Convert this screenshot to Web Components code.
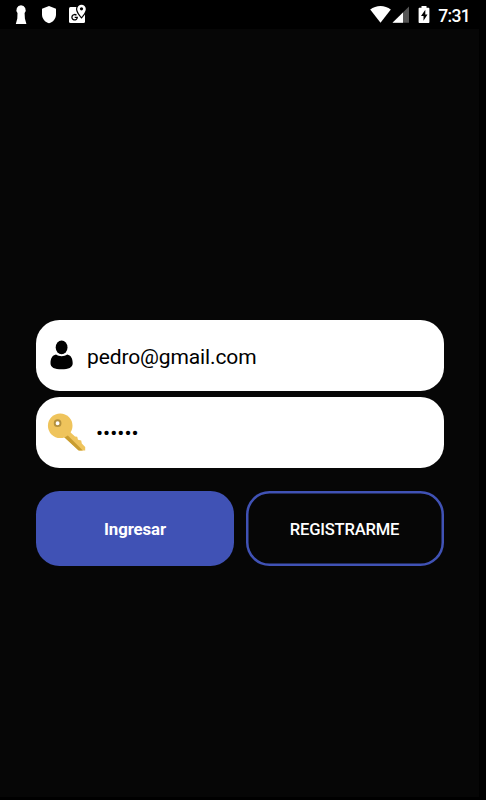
<!DOCTYPE html>
<html lang="es">
<head>
<meta charset="utf-8">
<title>Ingresar</title>
<style>
    body {
        margin: 0;
        background: #000;
        font-family: Roboto, "Liberation Sans", sans-serif;
    }
</style>
</head>
<body>
<login-screen></login-screen>

<script>
    function attach(el, html) {
        const template = document.createElement('template')
        template.innerHTML = html
        const root = el.attachShadow({ mode: 'open' })
        root.appendChild(template.content.cloneNode(true))
        return root
    }

    class StatusBar extends HTMLElement {
        constructor() {
            super();
            attach(this, `
                <style>
                    :host {
                        display: flex;
                        justify-content: space-between;
                        box-sizing: border-box;
                        height: 29px;
                        padding: 0 16.5px 0 14px;
                        background: #000;
                        color: #fff;
                    }
                    .group { display: flex; align-items: flex-start; }
                    svg { display: block; height: 29px; }
                    .time {
                        font-size: 17.5px;
                        font-weight: 500;
                        letter-spacing: -.65px;
                        line-height: 32px;
                        margin-left: 6px;
                        margin-right: -.65px;
                        white-space: nowrap;
                    }
                </style>
                <div class="group">
                    <svg width="76" height="29" viewBox="14 0 76 29" fill="#fff">
                        <path d="M21 5.2a4.8 4.8 0 0 1 3.600 7.800l.3 5.500L26.400 24H15.800l1.500-5.500.2-5.500A4.800 4.800 0 0 1 21 5.200z"/>
                        <path d="M49 6l7 2.700v5.800c0 4.200-3 7.700-7 8.800-4-1.100-7-4.600-7-8.800V8.700z"/>
                        <rect x="69" y="7" width="16" height="16" rx="1.500"/>
                        <path d="M81.500 4.700a4.300 4.300 0 0 1 4.300 4.300c0 3.200-4.300 8-4.300 8S77.200 12.200 77.200 9a4.300 4.300 0 0 1 4.300-4.300z" stroke="#000" stroke-width="2.400" paint-order="stroke"/>
                        <circle cx="81.500" cy="8.800" r="1.600" fill="#000"/>
                        <path d="M76.500 15.300a2.700 2.700 0 1 0 .8 2h-2.600" fill="none" stroke="#000" stroke-width="1.300"/>
                    </svg>
                </div>
                <div class="group">
                    <svg width="62" height="29" viewBox="370 0 62 29" fill="#fff">
                        <path d="M370.200 9.500c5.800-4.700 14.800-4.700 20.600 0L380.500 22.700z"/>
                        <path d="M409 6.500V22.700H392.500z" fill="#555"/>
                        <path d="M403 12.400V22.700H392.500z"/>
                        <path d="M421.500 6h5v1.800h1.900c.6 0 1 .4 1 1V22c0 .6-.4 1-1 1h-8.800c-.6 0-1-.4-1-1V8.800c0-.6.4-1 1-1h1.900z"/>
                        <path d="M425.300 9.700l-4.300 6.300h2.500v4.700l4-6.200h-2.200z" fill="#000"/>
                    </svg>
                    <span class="time"><slot></slot></span>
                </div>
            `)
        }
    }

    class LoginField extends HTMLElement {
        constructor() {
            super();
            attach(this, `
                <style>
                    :host {
                        display: flex;
                        align-items: center;
                        box-sizing: border-box;
                        height: 71px;
                        padding-left: 11px;
                        border-radius: 23.5px;
                        background: #fff;
                        color: #000;
                        font-size: 21px;
                    }
                    ::slotted(svg) { display: block; flex: none; margin-bottom: 2px; }
                    .value {
                        line-height: 25px;
                        padding-top: 4px;
                        letter-spacing: -.12px;
                        white-space: nowrap;
                    }
                    :host([secret]) .value {
                        letter-spacing: .02px;
                        padding-left: 10px;
                        padding-top: 2px;
                    }
                </style>
                <slot name="icon"></slot>
                <span class="value"><slot></slot></span>
            `)
        }
    }

    class LoginButton extends HTMLElement {
        constructor() {
            super();
            attach(this, `
                <style>
                    :host {
                        display: flex;
                        flex: 1;
                        align-items: center;
                        justify-content: center;
                        box-sizing: border-box;
                        height: 75px;
                        padding-top: 1px;
                        border-radius: 23.5px;
                        background: #4052b5;
                        color: #fff;
                        font-size: 16.8px;
                        font-weight: 700;
                        letter-spacing: -.1px;
                    }
                    :host([outline]) {
                        background: transparent;
                        box-shadow: inset 0 0 0 2.5px #4052b5;
                        font-size: 16.6px;
                        font-weight: 500;
                        letter-spacing: -.2px;
                    }
                </style>
                <slot></slot>
            `)
        }
    }

    class LoginScreen extends HTMLElement {
        constructor() {
            super();
            attach(this, `
                <style>
                    :host {
                        display: flex;
                        flex-direction: column;
                        height: 800px;
                        width: 486px;
                        background: #000;
                    }
                    main {
                        box-sizing: border-box;
                        width: 479px;
                        height: 768px;
                        padding: 291px 35.5px 0 36px;
                        background: #060606;
                    }
                    .fields { display: flex; flex-direction: column; gap: 6px; }
                    .actions { display: flex; gap: 11.5px; margin-top: 23.3px; }
                </style>
                <status-bar>7:31</status-bar>
                <main>
                    <div class="fields">
                        <login-field>
                            <svg slot="icon" width="40" height="40" viewBox="0 0 40 40">
                                <defs><filter id="soft"><feGaussianBlur stdDeviation=".6"/></filter></defs>
                                <g filter="url(#soft)">
                                    <ellipse cx="14.600" cy="12.400" rx="5.900" ry="6.900"/>
                                    <path d="M9 19.500c3.300 2.200 7.900 2.200 11.200 0 3.800.8 5.500 4 5.500 8.700 0 4.400-4.200 6-11.100 6S3.500 32.600 3.500 28.200c0-4.700 1.700-7.900 5.500-8.700z"/>
                                </g>
                            </svg>
                            pedro@gmail.com
                        </login-field>
                        <login-field secret>
                            <svg slot="icon" width="39" height="40" viewBox="0 0 39 40">
                                <path d="M17 25L22.500 19.500 28 24.600l2.200.2.800 3 3.200.7.600 3.100 3.400 3.400V38.500h-6z" fill="#efc45c"/>
                                <path d="M17 25L19.800 22.600 35.800 38.500H31.500z" fill="#c99d30"/>
                                <circle cx="13.200" cy="13.700" r="12.300" fill="#efc45c"/>
                                <circle cx="10.600" cy="11.200" r="2.900" fill="#fff" stroke="#b4913d" stroke-width="1.900"/>
                            </svg>
                            ••••••
                        </login-field>
                    </div>
                    <div class="actions">
                        <login-button>Ingresar</login-button>
                        <login-button outline>REGISTRARME</login-button>
                    </div>
                </main>
            `)
        }
    }

    customElements.define('status-bar', StatusBar)
    customElements.define('login-field', LoginField)
    customElements.define('login-button', LoginButton)
    customElements.define('login-screen', LoginScreen)
</script>
</body>
</html>
